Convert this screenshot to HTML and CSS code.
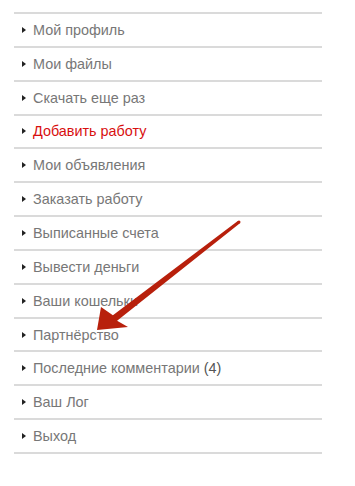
FILE: index.html
```html
<!DOCTYPE html>
<html lang="ru">
<head>
  <meta charset="UTF-8" />
  <title>Меню пользователя</title>
  <link rel="stylesheet" href="styles.css">
</head>
<body>
  <div class="panel">
    <ul class="menu">
      <li><a href="#">Мой профиль</a></li>
      <li><a href="#">Мои файлы</a></li>
      <li><a href="#">Скачать еще раз</a></li>
      <li><a href="#" class="accent">Добавить работу</a></li>
      <li><a href="#">Мои объявления</a></li>
      <li><a href="#">Заказать работу</a></li>
      <li><a href="#">Выписанные счета</a></li>
      <li><a href="#">Вывести деньги</a></li>
      <li><a href="#">Ваши кошельки</a></li>
      <li><a href="#">Партнёрство</a></li>
      <li><a href="#">Последние комментарии <span class="count">(4)</span></a></li>
      <li><a href="#">Ваш Лог</a></li>
      <li><a href="#">Выход</a></li>
    </ul>

    <!-- стрелка-указатель поверх меню -->
    <svg class="pointer" viewBox="0 0 355 486" xmlns="http://www.w3.org/2000/svg">
      <polygon points="238.1,220.8 112.9,315.2 101,307 97,330 128,327 117.1,320.8 239.9,223.2" />
      <circle cx="239" cy="222" r="1.5" />
    </svg>
  </div>
</body>
</html>
```

FILE: styles.css
```css
* {
  margin: 0;
  padding: 0;
  box-sizing: border-box;
}

body {
  background: #fff;
  font-family: 'Liberation Sans', Arial, sans-serif;
  font-size: 14.4px;
}

.panel {
  position: relative;
  width: 355px;
  height: 486px;
  padding-top: 12px;
}

.menu {
  list-style: none;
  margin-left: 14px;
  width: 308px;
  border-top: 2px solid #dadada;
}

.menu li {
  height: 33.85px;
  border-bottom: 2px solid #dadada;
  display: flex;
  align-items: center;
  padding-left: 8px;
}

/* маленький треугольник-маркер */
.menu li::before {
  content: '';
  display: block;
  width: 0;
  height: 0;
  border-left: 4px solid #222;
  border-top: 3px solid transparent;
  border-bottom: 3px solid transparent;
  margin-right: 7px;
}

.menu a {
  color: #777;
  text-decoration: none;
}

.menu a.accent {
  color: #d80f0f;
}

.count {
  color: #555;
}

.pointer {
  position: absolute;
  left: 0;
  top: 0;
  width: 355px;
  height: 486px;
  pointer-events: none;
}

.pointer polygon,
.pointer circle {
  fill: #b8200c;
}
```
